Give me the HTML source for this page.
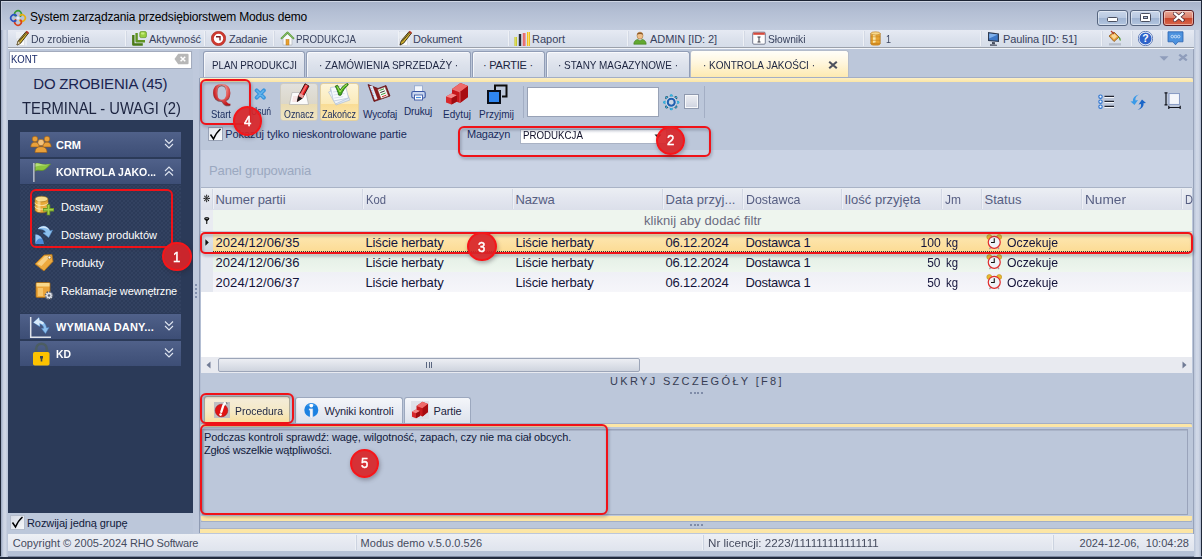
<!DOCTYPE html>
<html lang="pl"><head><meta charset="utf-8"><title>System zarządzania przedsiębiorstwem Modus demo</title>
<style>
html,body{margin:0;padding:0}
body{width:1202px;height:559px;overflow:hidden;position:relative;background:#bcc7da;font-family:"Liberation Sans", sans-serif;}
#w{position:absolute;left:0;top:0;width:1202px;height:559px;overflow:hidden}
#w div,#w span.t,#w svg{position:absolute;box-sizing:border-box}
#w span.t{white-space:pre;}
</style></head><body><div id="w">
<div style="left:0;top:0;width:1202px;height:559px;background:#b6c1d6"></div>
<div style="left:0px;top:0px;width:1202px;height:30px;background:linear-gradient(#a6b1c8,#b4bfd4 40%,#c2ccde)"></div>
<div style="left:0px;top:0px;width:1202px;height:1px;background:#1b2232"></div>
<div style="left:1px;top:1px;width:1200px;height:1px;background:#cfd6e4"></div>
<div style="left:0px;top:0px;width:1px;height:559px;background:#1f2738"></div>
<div style="left:1201px;top:0px;width:1px;height:559px;background:#1f2738"></div>
<div style="left:0px;top:556px;width:1202px;height:1px;background:#7f8aa2"></div>
<div style="left:0px;top:557px;width:1202px;height:2px;background:#232b3d"></div>
<div style="left:1px;top:30px;width:7px;height:527px;background:linear-gradient(90deg,#98a4bc 0,#c6cfe0 30%,#d2d9e7 60%,#b7c2d6 100%)"></div>
<div style="left:1px;top:2px;width:1px;height:28px;background:#c3cbdc"></div>
<div style="left:1194px;top:30px;width:7px;height:527px;background:linear-gradient(90deg,#b9c4d8 0,#d0d8e7 35%,#cdd5e5 70%,#aab5cb 100%)"></div>
<svg style="left:9px;top:9px" width="18" height="18" viewBox="0 0 18 18" fill="none" stroke-width="1.700" stroke-linecap="round">
<path d="M6.200 6.800A3.300 3.300 0 1 1 11.500 7.200" stroke="#3a9a35"/>
<path d="M11.200 6.200A3.300 3.300 0 1 1 10.800 11.500" stroke="#e8b010"/>
<path d="M11.800 11.200A3.300 3.300 0 1 1 6.500 10.800" stroke="#d8401c"/>
<path d="M6.800 11.800A3.300 3.300 0 1 1 7.200 6.500" stroke="#2a52c0"/>
<circle cx="9" cy="9" r="1.600" fill="#e8ecf4" stroke="none"/>
</svg>
<span class="t" style="left:30px;top:9.0px;font-size:12px;line-height:16px;color:#000;letter-spacing:-0.15px;">System zarządzania przedsiębiorstwem Modus demo</span>
<div style="left:1097px;top:10px;width:31px;height:16px;border:1px solid #56657f;border-radius:3px;background:linear-gradient(#c9d6ea,#b8c8e0 50%,#9fb3d1 50%,#b3c6e0);box-shadow:inset 0 0 0 1px rgba(255,255,255,.45)"></div>
<div style="left:1130px;top:10px;width:31px;height:16px;border:1px solid #56657f;border-radius:3px;background:linear-gradient(#c9d6ea,#b8c8e0 50%,#9fb3d1 50%,#b3c6e0);box-shadow:inset 0 0 0 1px rgba(255,255,255,.45)"></div>
<div style="left:1163px;top:10px;width:31px;height:16px;border:1px solid #5e1e24;border-radius:3px;background:linear-gradient(#e9a898,#dc7e69 50%,#c9452b 50%,#d8674c);box-shadow:inset 0 0 0 1px rgba(255,255,255,.45)"></div>
<div style="left:1107px;top:17px;width:11px;height:5px;border:1px solid #4a4f60;border-radius:1.5px;background:#fff"></div>
<div style="left:1140px;top:13px;width:11px;height:9px;border:1px solid #4a4f60;border-radius:1.5px;background:#fff"></div>
<div style="left:1143px;top:16px;width:5px;height:3px;border:1px solid #4a4f60;background:#b5c4dc"></div>
<svg style="left:1173px;top:12.300px" width="11.500" height="9.800" viewBox="0 0 13 11"><path d="M2.200 1.800l8.600 7.400M10.800 1.800L2.200 9.200" stroke="#4e2a34" stroke-width="4.200" stroke-linecap="square"/><path d="M2.200 1.800l8.600 7.400M10.800 1.800L2.200 9.200" stroke="#fff" stroke-width="2.600" stroke-linecap="square"/></svg>
<div style="left:8px;top:30px;width:1186px;height:17px;background:linear-gradient(#e6eaf3,#dbe1ec 55%,#d6dde9)"></div>
<div style="left:8px;top:47px;width:1186px;height:1px;background:#9ba1ab"></div>
<div style="left:8px;top:48px;width:1186px;height:1px;background:#f4f6fa"></div>
<div style="left:8px;top:49px;width:1185px;height:485px;background:#bcc7da"></div>
<div style="left:125px;top:31px;width:1px;height:15px;background:#eef1f6"></div>
<div style="left:126px;top:31px;width:1px;height:15px;background:#d3d9e5"></div>
<div style="left:204px;top:31px;width:1px;height:15px;background:#eef1f6"></div>
<div style="left:205px;top:31px;width:1px;height:15px;background:#d3d9e5"></div>
<div style="left:273px;top:31px;width:1px;height:15px;background:#eef1f6"></div>
<div style="left:274px;top:31px;width:1px;height:15px;background:#d3d9e5"></div>
<div style="left:398px;top:31px;width:1px;height:15px;background:#eef1f6"></div>
<div style="left:399px;top:31px;width:1px;height:15px;background:#d3d9e5"></div>
<div style="left:508px;top:31px;width:1px;height:15px;background:#eef1f6"></div>
<div style="left:509px;top:31px;width:1px;height:15px;background:#d3d9e5"></div>
<div style="left:627px;top:31px;width:1px;height:15px;background:#eef1f6"></div>
<div style="left:628px;top:31px;width:1px;height:15px;background:#d3d9e5"></div>
<div style="left:743px;top:31px;width:1px;height:15px;background:#eef1f6"></div>
<div style="left:744px;top:31px;width:1px;height:15px;background:#d3d9e5"></div>
<div style="left:863px;top:31px;width:1px;height:15px;background:#eef1f6"></div>
<div style="left:864px;top:31px;width:1px;height:15px;background:#d3d9e5"></div>
<div style="left:980px;top:31px;width:1px;height:15px;background:#eef1f6"></div>
<div style="left:981px;top:31px;width:1px;height:15px;background:#d3d9e5"></div>
<div style="left:1101px;top:31px;width:1px;height:15px;background:#eef1f6"></div>
<div style="left:1102px;top:31px;width:1px;height:15px;background:#d3d9e5"></div>
<div style="left:1131px;top:31px;width:1px;height:15px;background:#eef1f6"></div>
<div style="left:1132px;top:31px;width:1px;height:15px;background:#d3d9e5"></div>
<div style="left:1161px;top:31px;width:1px;height:15px;background:#eef1f6"></div>
<div style="left:1162px;top:31px;width:1px;height:15px;background:#d3d9e5"></div>
<span class="t" style="left:30.5px;top:31.5px;font-size:11px;line-height:15px;color:#38425e;transform:scaleX(0.947);transform-origin:0 50%;">Do zrobienia</span>
<span class="t" style="left:149px;top:31.5px;font-size:11px;line-height:15px;color:#38425e;letter-spacing:-0.06px;">Aktywność</span>
<span class="t" style="left:229px;top:31.5px;font-size:11px;line-height:15px;color:#38425e;letter-spacing:-0.25px;">Zadanie</span>
<span class="t" style="left:296px;top:31.5px;font-size:11px;line-height:15px;color:#38425e;transform:scaleX(0.884);transform-origin:0 50%;">PRODUKCJA</span>
<span class="t" style="left:413px;top:31.5px;font-size:11px;line-height:15px;color:#38425e;letter-spacing:-0.14px;">Dokument</span>
<span class="t" style="left:532px;top:31.5px;font-size:11px;line-height:15px;color:#38425e;letter-spacing:-0.01px;">Raport</span>
<span class="t" style="left:650px;top:31.5px;font-size:11px;line-height:15px;color:#38425e;letter-spacing:-0.06px;">ADMIN [ID: 2]</span>
<span class="t" style="left:768px;top:31.5px;font-size:11px;line-height:15px;color:#38425e;transform:scaleX(0.929);transform-origin:0 50%;">Słowniki</span>
<span class="t" style="left:886px;top:31.5px;font-size:11px;line-height:15px;color:#38425e;transform:scaleX(0.816);transform-origin:0 50%;">1</span>
<span class="t" style="left:1003px;top:31.5px;font-size:11px;line-height:15px;color:#38425e;letter-spacing:-0.08px;">Paulina [ID: 51]</span>
<svg style="left:16px;top:30px" width="14" height="16" viewBox="0 0 14 16"><path d="M0 2h11v13.500H0z" fill="#f4f5f8" opacity=".55"/><path d="M.5 9h8v6.500H.5z" fill="#fbfbfb" stroke="#c9ccd4" stroke-width=".5"/><path d="M1 15l1.2-4.2L10.2 1.5l2.2 1.7L4.6 13.2z" fill="#d8b62e" stroke="#2a2410" stroke-width=".9"/><path d="M10.2 1.5l2.2 1.7" stroke="#c0392b" stroke-width="2"/><path d="M1 15l1.2-4.2 2.4 2.4z" fill="#f1e6c8" stroke="#5a4a20" stroke-width=".6"/><path d="M3 11.5L10.8 2.6" stroke="#3b3320" stroke-width=".9"/></svg>
<svg style="left:132px;top:31px" width="16" height="15" viewBox="0 0 16 15"><path d="M1.300 4v9.500h9.500" fill="none" stroke="#4a7a16" stroke-width="2.400" stroke-linejoin="round"/><path d="M4.600 2v8.300h8.400" fill="none" stroke="#5f9420" stroke-width="2.400" stroke-linejoin="round"/><rect x="7.800" y=".6" width="6.600" height="6" rx="1.400" fill="#9ad040" stroke="#5f9420" stroke-width=".7"/><rect x="9" y="1.600" width="3.500" height="2" rx=".8" fill="#c8ec80"/></svg>
<svg style="left:211px;top:31px" width="15" height="15" viewBox="0 0 15 15"><circle cx="7.500" cy="7.500" r="6" fill="#fff" stroke="#cf3a30" stroke-width="2.600"/><circle cx="7.500" cy="7.500" r="7.200" fill="none" stroke="#9a2a24" stroke-width=".5"/><path d="M5 5.800h4v3.600" fill="none" stroke="#7a2224" stroke-width="1.400"/></svg>
<svg style="left:279.500px;top:30.500px" width="15" height="15" viewBox="0 0 15 15"><path d="M3 7v7h9V7L7.500 2.800z" fill="#fafafa" stroke="#b0b4bc" stroke-width=".7"/><rect x="6" y="8.500" width="3" height="5.500" fill="#e8a030" stroke="#b87818" stroke-width=".5"/><path d="M1 7.800l6.500-6.300 6.500 6.300" fill="none" stroke="#5c9c3c" stroke-width="1.800" stroke-linejoin="round"/><path d="M1.600 7.200l5.900-5.700 5.900 5.700" fill="none" stroke="#a4d47c" stroke-width=".6"/></svg>
<svg style="left:399px;top:30px" width="14" height="16" viewBox="0 0 14 16"><path d="M0 2h11v13.500H0z" fill="#f4f5f8" opacity=".55"/><path d="M.5 9h8v6.500H.5z" fill="#fbfbfb" stroke="#c9ccd4" stroke-width=".5"/><path d="M1 15l1.2-4.2L10.2 1.5l2.2 1.7L4.6 13.2z" fill="#d8b62e" stroke="#2a2410" stroke-width=".9"/><path d="M10.2 1.5l2.2 1.7" stroke="#c0392b" stroke-width="2"/><path d="M3 11.5L10.8 2.6" stroke="#3b3320" stroke-width=".9"/></svg>
<svg style="left:514px;top:31px" width="17" height="15" viewBox="0 0 17 15"><rect x=".5" y="6" width="2.400" height="9" fill="#c4c41e"/><rect x="1.300" y="6" width=".8" height="9" fill="#e8e870"/><rect x="4.800" y="3" width="2.400" height="12" fill="#262c3a"/><rect x="8.800" y="2" width="2.600" height="13" fill="#e04a4c"/><rect x="9.600" y="2" width=".9" height="13" fill="#f6a0a0"/><rect x="13" y="1" width="3" height="14" fill="#f0c020"/><rect x="14" y="1" width="1" height="14" fill="#f8e070"/></svg>
<svg style="left:633px;top:31px" width="14" height="14" viewBox="0 0 14 14"><path d="M.8 13.200c0-3 2-4.500 4-4.800l2.200 1.600 2.200-1.600c2 .3 4 1.800 4 4.800z" fill="#62a830" stroke="#3d7a1a" stroke-width=".6"/><ellipse cx="7" cy="4.600" rx="3" ry="3.500" fill="#efc08a" stroke="#a9743a" stroke-width=".6"/><path d="M4 3.800c.3-3 5.700-3 6 0-1.500-1.200-4.500-1.200-6 0z" fill="#8a5a2a"/></svg>
<svg style="left:752px;top:31px" width="14" height="14" viewBox="0 0 14 14"><rect x=".7" y="1.200" width="12.600" height="12" rx="1.200" fill="#fdfdfd" stroke="#6a7288" stroke-width=".9"/><rect x="1.200" y="1.600" width="11.600" height="2.200" fill="#d64a3c"/><path d="M5.500 6h3M7 6v5M5.500 11h3" stroke="#3a3a44" stroke-width="1"/></svg>
<svg style="left:870px;top:31px" width="11" height="15" viewBox="0 0 11 15"><rect x=".8" y="2.300" width="9.400" height="10.700" fill="#e8a432"/><rect x="3" y="2.300" width="2.600" height="10.700" fill="#fbe6a6"/><path d="M.8 5.800h9.400M.8 9.300h9.400" stroke="#c98a24" stroke-width=".7"/><ellipse cx="5.500" cy="13" rx="4.700" ry="1.500" fill="#d08a20"/><ellipse cx="5.500" cy="2.400" rx="4.700" ry="1.600" fill="#f8d88a" stroke="#b9791c" stroke-width=".6"/><path d="M.8 2.400v10.600M10.200 2.400v10.600" stroke="#a9701c" stroke-width=".7"/></svg>
<svg style="left:987px;top:31px" width="14" height="15" viewBox="0 0 14 15"><path d="M1 1l11 1.500v8.500L1 10z" fill="#2d3a52"/><path d="M2.200 2.400l8.600 1.200v6.200l-8.600-.8z" fill="#3d78c8"/><path d="M2.200 2.400l8.600 1.200-8.600 4z" fill="#7fb0ec"/><path d="M5 11l3 .3v2l-3 -.2zM3 13.200l7 .6v1H3z" fill="#454c5c"/></svg>
<svg style="left:1107px;top:30px" width="16" height="16" viewBox="0 0 16 16"><path d="M2 6l5-4 5 5-5 4.500z" fill="#e9a23a" stroke="#8a5618" stroke-width=".8"/><path d="M4 6l3-2.500 3 3-3 2.700z" fill="#f8d898"/><path d="M4 1l3 3" stroke="#b03a2a" stroke-width="1.200"/><path d="M11.500 6.500c2 .5 2.500 2.500 2 4.500-1-.5-1.500-2-2-4.500z" fill="#4d9a2a"/><rect x="2" y="13.200" width="12" height="2.200" fill="#b5bcc9"/></svg>
<svg style="left:1138px;top:31px" width="15" height="15" viewBox="0 0 15 15"><circle cx="7.500" cy="7.500" r="6.700" fill="#2f63c9" stroke="#fff" stroke-width="1.200"/><circle cx="7.500" cy="7.500" r="7.200" fill="none" stroke="#2a4f9f" stroke-width=".7"/><text x="7.500" y="11.200" font-family="Liberation Sans, sans-serif" font-weight="bold" font-size="10.500" text-anchor="middle" fill="#fff">?</text></svg>
<svg style="left:1167px;top:31px" width="17" height="15" viewBox="0 0 17 15"><path d="M1 .800h15v10h-5L8.500 13.800 6 10.800H1z" fill="#4d92de" stroke="#2a63b0" stroke-width=".8"/><circle cx="5.300" cy="5.600" r="1.300" fill="none" stroke="#dcebfb" stroke-width=".8"/><circle cx="8.500" cy="5.600" r="1.300" fill="none" stroke="#dcebfb" stroke-width=".8"/><circle cx="11.700" cy="5.600" r="1.300" fill="none" stroke="#dcebfb" stroke-width=".8"/></svg>
<div style="left:9px;top:50.5px;width:183px;height:18px;background:#fff;border:1px solid #a3abbd"></div>
<span class="t" style="left:11px;top:51.8px;font-size:11px;line-height:15px;color:#1a2a6a;transform:scaleX(0.867);transform-origin:0 50%;">KONT</span>
<svg style="left:173.500px;top:53px" width="15" height="12" viewBox="0 0 16 12"><path d="M4.500 .5h10a1 1 0 0 1 1 1v9a1 1 0 0 1-1 1h-10L.5 6z" fill="#b7b7b7"/><path d="M7 3.500l5 5M12 3.500l-5 5" stroke="#fff" stroke-width="1.600"/></svg>
<span class="t" style="left:33.3px;top:74.1px;font-size:15px;line-height:19px;color:#1a2450;letter-spacing:-0.21px;">DO ZROBIENIA (45)</span>
<span class="t" style="left:22px;top:98.0px;font-size:17px;line-height:21px;color:#1c2440;transform:scaleX(0.869);transform-origin:0 50%;">TERMINAL - UWAGI (2)</span>
<div style="left:8px;top:120px;width:185px;height:393px;background:#2b3a58"></div>
<div style="left:20px;top:185px;width:161px;height:128px;background-color:#2c3b59;background-image:radial-gradient(#364564 0.600px,transparent 0.950px),radial-gradient(#364564 0.600px,transparent 0.950px);background-size:4px 4px;background-position:0 0,2px 2px"></div>
<div style="left:20px;top:132px;width:161px;height:25px;background:linear-gradient(#50618a,#46577f 50%,#3d4e76)"></div>
<span class="t" style="left:56px;top:137.5px;font-size:11px;line-height:15px;color:#fff;letter-spacing:-0.02px;font-weight:bold;">CRM</span>
<svg style="left:164px;top:138px" width="10" height="12" viewBox="0 0 10 12"><path d="M1 1.500l4 4 4-4M1 6l4 4 4-4" fill="none" stroke="#dfe5f0" stroke-width="1.100"/></svg>
<div style="left:20px;top:159px;width:161px;height:25px;background:linear-gradient(#50618a,#46577f 50%,#3d4e76)"></div>
<span class="t" style="left:56px;top:164.5px;font-size:11px;line-height:15px;color:#fff;font-weight:bold;transform:scaleX(0.955);transform-origin:0 50%;">KONTROLA JAKO...</span>
<svg style="left:164px;top:165px" width="10" height="12" viewBox="0 0 10 12"><path d="M1 6l4-4 4 4M1 10.500l4-4 4 4" fill="none" stroke="#dfe5f0" stroke-width="1.100"/></svg>
<div style="left:20px;top:314px;width:161px;height:25px;background:linear-gradient(#50618a,#46577f 50%,#3d4e76)"></div>
<span class="t" style="left:56px;top:319.5px;font-size:11px;line-height:15px;color:#fff;letter-spacing:0.16px;font-weight:bold;">WYMIANA DANY...</span>
<svg style="left:164px;top:320px" width="10" height="12" viewBox="0 0 10 12"><path d="M1 1.500l4 4 4-4M1 6l4 4 4-4" fill="none" stroke="#dfe5f0" stroke-width="1.100"/></svg>
<div style="left:20px;top:341px;width:161px;height:25px;background:linear-gradient(#50618a,#46577f 50%,#3d4e76)"></div>
<span class="t" style="left:56px;top:346.5px;font-size:11px;line-height:15px;color:#fff;font-weight:bold;transform:scaleX(0.944);transform-origin:0 50%;">KD</span>
<svg style="left:164px;top:347px" width="10" height="12" viewBox="0 0 10 12"><path d="M1 1.500l4 4 4-4M1 6l4 4 4-4" fill="none" stroke="#dfe5f0" stroke-width="1.100"/></svg>
<span class="t" style="left:61px;top:199.5px;font-size:11px;line-height:15px;color:#fff;letter-spacing:-0.03px;">Dostawy</span>
<span class="t" style="left:61px;top:227.5px;font-size:11px;line-height:15px;color:#fff;">Dostawy produktów</span>
<span class="t" style="left:61px;top:255.5px;font-size:11px;line-height:15px;color:#fff;letter-spacing:-0.05px;">Produkty</span>
<span class="t" style="left:61px;top:283.5px;font-size:11px;line-height:15px;color:#fff;letter-spacing:-0.15px;">Reklamacje wewnętrzne</span>
<svg style="left:30px;top:135px" width="22" height="19" viewBox="0 0 22 19"><g fill="#e8a03a" stroke="#9a5c14" stroke-width=".6"><circle cx="5" cy="4" r="2.800"/><circle cx="17" cy="4" r="2.800"/><path d="M.800 12c0-3.500 1.800-4.800 4.200-4.800S9.200 8.500 9.200 12zM12.800 12c0-3.500 1.800-4.800 4.200-4.800s4.200 1.300 4.200 4.800z"/><circle cx="11" cy="7.500" r="3.200" fill="#f3c27a"/><path d="M5 17.500c0-4.200 2.600-5.800 6-5.800s6 1.600 6 5.800z"/></g></svg>
<svg style="left:32px;top:162px" width="20" height="21" viewBox="0 0 20 21"><path d="M2.500 2c4-2.500 7 2.500 16 0-2 2.500-3.500 3.500-5.500 5.500-4 2.500-6-1-10.500 2z" fill="#8cc63f" stroke="#5d8f22" stroke-width=".7"/><path d="M2.500 2c4-2.500 7 2.500 16 0-5 3-9 0-16 3z" fill="#b7e07a"/><path d="M2 1v19" stroke="#d8dde8" stroke-width="1.400"/><path d="M3 1v19" stroke="#4a5060" stroke-width=".7"/></svg>
<svg style="left:34px;top:195px" width="21" height="21" viewBox="0 0 21 21"><g stroke="#9a6a14" stroke-width=".6"><path d="M1 4v11c0 1.600 3 2.800 6.500 2.800S14 16.600 14 15V4z" fill="#e8aa3a"/><ellipse cx="7.500" cy="4" rx="6.500" ry="2.800" fill="#f8dc8c"/><path d="M1 7.700c0 1.600 3 2.800 6.500 2.800S14 9.300 14 7.700M1 11.400c0 1.600 3 2.800 6.500 2.800S14 13 14 11.400" fill="none" stroke="#fbe9b5" stroke-width="1"/></g><rect x="3.500" y="5" width="3" height="12" fill="#f9e3a6" opacity=".6"/><path d="M14.500 9.300v11M9 14.800h11" stroke="#6f9a22" stroke-width="3.400"/><path d="M14.500 10v9.600M9.700 14.800h9.600" stroke="#a4d04a" stroke-width="1.500"/></svg>
<svg style="left:34px;top:224px" width="21" height="21" viewBox="0 0 21 21"><path d="M1.500 20V10.500c4 0 7.500 3 8.500 9.500z" fill="#4a8ad8"/><path d="M1.500 20V10.500c2.500 0 5 1.500 6.500 4.500-2.500-1-5-.5-6.500 5z" fill="#9cc8f2"/><path d="M4 5c3-4 9.500-4 12 2l2.500-.8-3.800 7.300-5.700-4.500 2.800-.8c-1.500-3-5-3.500-7.800-3.200z" fill="#8cc0ee" stroke="#5a98d8" stroke-width=".5"/><path d="M4 5c3-4 9.500-4 12 2-3-3.500-8-4-12-2z" fill="#d6e9fa"/></svg>
<svg style="left:34px;top:253px" width="20" height="19" viewBox="0 0 20 19"><path d="M1 11l9-9 8-.5 1 7-9 9.500z" fill="#eda93e" stroke="#a9701a" stroke-width=".8"/><path d="M3 11l8-8 6-.3-9.500 10.300z" fill="#f8cf82"/><circle cx="15.500" cy="4.500" r="1.400" fill="#fff" stroke="#8a5a14" stroke-width=".6"/></svg>
<svg style="left:35px;top:281px" width="20" height="20" viewBox="0 0 20 20"><rect x="1" y="1.500" width="14" height="15" rx="1.200" fill="#eba53a" stroke="#a56a14" stroke-width=".8"/><rect x="1.500" y="2" width="13" height="3.500" fill="#f9d88a"/><rect x="3" y="7" width="5" height="8" fill="#f6c56a"/><circle cx="14" cy="14.500" r="3.600" fill="#dfe3ea" stroke="#5e6573" stroke-width="1.600" stroke-dasharray="1.600 1.200"/><circle cx="14" cy="14.500" r="1.300" fill="#5e6573"/></svg>
<svg style="left:29px;top:316px" width="23" height="23" viewBox="0 0 23 23"><path d="M1.700 1v20.300H22" fill="none" stroke="#dfe3ea" stroke-width="1.500"/><path d="M4.500 6.500L10 1.500l.5 3c4 .5 6.500 3.500 7 7.500l2.500-.5-3.500 6-4-5 2.300-.300c-.5-2.500-2-4-4.500-4.500l.5 3z" fill="#8ec0ee" stroke="#4a86c8" stroke-width=".5"/><path d="M4.500 6.500L10 1.500l.5 3c2 .300 3.500 1.200 4.700 2.600l-2 1.500c-.8-.8-1.800-1.300-2.900-1.500l.500 3z" fill="#d8eafa"/></svg>
<svg style="left:32px;top:342px" width="19" height="24" viewBox="0 0 19 24"><path d="M4.200 11V7a5.300 5.300 0 0 1 10.600 0v4" fill="none" stroke="#4c5d62" stroke-width="2.600"/><rect x="1" y="10" width="16.500" height="13.500" rx="1.800" fill="#fcc200"/><path d="M8 14h3v2.200l-.7.600v2.700H8.700v-2.700L8 16.200z" fill="#3a4450"/></svg>
<div style="left:30px;top:189px;width:143px;height:59px;border:2px solid #f01218;border-radius:6px;filter:drop-shadow(1px 2px 1.500px rgba(50,50,70,.38))"></div>
<div style="left:162.0px;top:241.7px;width:29.600px;height:29.600px;border-radius:50%;background:rgba(216,36,40,.92);border:2px solid #f5161a;box-shadow:1px 2px 4px rgba(40,30,40,.35)"></div>
<span class="t" style="left:173.10000000000002px;top:246.5px;font-size:15px;line-height:19px;color:#fff;transform:scaleX(0.875);transform-origin:0 50%;-webkit-text-stroke:.5px #fff;">1</span>
<div style="left:10px;top:515px;width:15px;height:15px;background:linear-gradient(135deg,#d6dbe5,#f6f7fa);border:1px solid #b4bccb"></div>
<svg style="left:11px;top:516px" width="13" height="13" viewBox="0 0 13 13"><path d="M1.500 6.500l3 4.500c2-4.500 4-7.500 7-10" fill="none" stroke="#000" stroke-width="1.500"/></svg>
<span class="t" style="left:27px;top:515.5px;font-size:11px;line-height:15px;color:#111a3a;letter-spacing:-0.08px;">Rozwijaj jedną grupę</span>
<div style="left:8px;top:534px;width:1186px;height:17px;background:linear-gradient(#edf0f5,#e6e9f1 50%,#dfe4ed)"></div>
<div style="left:355px;top:535px;width:1px;height:15px;background:#eef1f6"></div>
<div style="left:356px;top:535px;width:1px;height:15px;background:#ccd3e0"></div>
<div style="left:702px;top:535px;width:1px;height:15px;background:#eef1f6"></div>
<div style="left:703px;top:535px;width:1px;height:15px;background:#ccd3e0"></div>
<div style="left:1052px;top:535px;width:1px;height:15px;background:#eef1f6"></div>
<div style="left:1053px;top:535px;width:1px;height:15px;background:#ccd3e0"></div>
<span class="t" style="left:12.7px;top:535.5px;font-size:11px;line-height:15px;color:#454b5e;letter-spacing:0.03px;">Copyright © 2005-2024</span>
<span class="t" style="left:130px;top:535.5px;font-size:11px;line-height:15px;color:#454b5e;letter-spacing:-0.22px;">RHO Software</span>
<span class="t" style="left:360.5px;top:535.5px;font-size:11px;line-height:15px;color:#454b5e;letter-spacing:0.06px;">Modus demo v.5.0.0.526</span>
<span class="t" style="left:708.3px;top:535.5px;font-size:11px;line-height:15px;color:#454b5e;transform:scaleX(1.056);transform-origin:0 50%;">Nr licencji: 2223/111111111111111</span>
<span class="t" style="left:1079.5px;top:535.5px;font-size:11px;line-height:15px;color:#454b5e;letter-spacing:0.06px;">2024-12-06,  10:04:28</span>
<div style="left:193px;top:49px;width:6px;height:485px;background:#bfc9dc"></div>
<div style="left:199px;top:78px;width:1px;height:455px;background:#8f9bb3"></div>
<div style="left:200px;top:78px;width:1px;height:455px;background:#b3bed3"></div>
<div style="left:195px;top:284px;width:2px;height:2px;background:#8290ae"></div>
<div style="left:195px;top:288px;width:2px;height:2px;background:#8290ae"></div>
<div style="left:195px;top:292px;width:2px;height:2px;background:#8290ae"></div>
<div style="left:195px;top:296px;width:2px;height:2px;background:#8290ae"></div>
<div style="left:203px;top:50.500px;width:102px;height:26.500px;border:1px solid #919db6;border-bottom:none;border-radius:3px 3px 0 0;background:linear-gradient(#eaedf4,#dde2ec 50%,#d3dae6);box-shadow:inset 1px 1px 0 rgba(255,255,255,.7)"></div>
<span class="t" style="left:212px;top:57.5px;font-size:11px;line-height:15px;color:#1c2440;transform:scaleX(0.891);transform-origin:0 50%;">PLAN PRODUKCJI</span>
<div style="left:306px;top:50.500px;width:165px;height:26.500px;border:1px solid #919db6;border-bottom:none;border-radius:3px 3px 0 0;background:linear-gradient(#eaedf4,#dde2ec 50%,#d3dae6);box-shadow:inset 1px 1px 0 rgba(255,255,255,.7)"></div>
<span class="t" style="left:319.2px;top:57.5px;font-size:11px;line-height:15px;color:#1c2440;transform:scaleX(0.911);transform-origin:0 50%;">· ZAMÓWIENIA SPRZEDAŻY ·</span>
<div style="left:472px;top:50.500px;width:73px;height:26.500px;border:1px solid #919db6;border-bottom:none;border-radius:3px 3px 0 0;background:linear-gradient(#eaedf4,#dde2ec 50%,#d3dae6);box-shadow:inset 1px 1px 0 rgba(255,255,255,.7)"></div>
<span class="t" style="left:483px;top:57.5px;font-size:11px;line-height:15px;color:#1c2440;letter-spacing:-0.22px;">· PARTIE ·</span>
<div style="left:546px;top:50.500px;width:144px;height:26.500px;border:1px solid #919db6;border-bottom:none;border-radius:3px 3px 0 0;background:linear-gradient(#eaedf4,#dde2ec 50%,#d3dae6);box-shadow:inset 1px 1px 0 rgba(255,255,255,.7)"></div>
<span class="t" style="left:558px;top:57.5px;font-size:11px;line-height:15px;color:#1c2440;transform:scaleX(0.903);transform-origin:0 50%;">· STANY MAGAZYNOWE ·</span>
<div style="left:690px;top:49.500px;width:159px;height:28.500px;border:1px solid #b4bccb;border-bottom:none;border-radius:3px 3px 0 0;background:linear-gradient(#fffefa,#fff6dc 45%,#fde9ae)"></div>
<span class="t" style="left:703px;top:57.5px;font-size:11px;line-height:15px;color:#1c2440;transform:scaleX(0.907);transform-origin:0 50%;">· KONTROLA JAKOŚCI ·</span>
<svg style="left:828px;top:61px" width="10" height="8" viewBox="0 0 10 8"><path d="M1.200 .8l7.600 6.400M8.800 .8L1.200 7.200" stroke="#4d515d" stroke-width="2.100"/></svg>
<svg style="left:1158.500px;top:56px" width="10" height="5" viewBox="0 0 10 5"><path d="M.5 .3h9L5 4.800z" fill="#8f9dbb"/></svg>
<svg style="left:1178px;top:54px" width="10" height="7" viewBox="0 0 10 7"><path d="M1.200 .6l7.600 5.800M8.800 .6L1.200 6.400" stroke="#8f9dbb" stroke-width="2.300"/></svg>
<div style="left:200px;top:77px;width:993px;height:1px;background:#a3aec5"></div>
<div style="left:200px;top:78px;width:993px;height:4px;background:linear-gradient(#fdf0c6,#fbe6a6);border-radius:0 2px 0 0"></div>
<div style="left:1193px;top:49px;width:1px;height:485px;background:#98a3ba"></div>
<div style="left:201px;top:82px;width:992px;height:68px;background:#bcc7da"></div>
<div style="left:201px;top:150px;width:992px;height:37.5px;background:#cad3e4"></div>
<div style="left:280px;top:83px;width:38px;height:37.5px;border:1px solid #cfccc2;border-radius:3px;background:linear-gradient(#e2e1dc,#dbd7ca 55%,#e9dbb2 55%,#f0e5c2)"></div>
<div style="left:320px;top:83px;width:39px;height:37.5px;border:1px solid #e2d0a0;border-radius:3px;background:linear-gradient(#fdf5da,#fbeab8 55%,#f9dc94 55%,#fbe7b0)"></div>
<span class="t" style="left:211px;top:108.0px;font-size:10px;line-height:14px;color:#182a5c;transform:scaleX(0.947);transform-origin:0 50%;">Start</span>
<span class="t" style="left:251px;top:105.0px;font-size:10px;line-height:14px;color:#182a5c;transform:scaleX(0.856);transform-origin:0 50%;">Usuń</span>
<span class="t" style="left:284px;top:108.0px;font-size:10px;line-height:14px;color:#182a5c;transform:scaleX(0.885);transform-origin:0 50%;">Oznacz</span>
<span class="t" style="left:322px;top:108.0px;font-size:10px;line-height:14px;color:#182a5c;transform:scaleX(0.9);transform-origin:0 50%;">Zakończ</span>
<span class="t" style="left:363px;top:108.0px;font-size:10px;line-height:14px;color:#182a5c;letter-spacing:-0.21px;">Wycofaj</span>
<span class="t" style="left:404px;top:105.0px;font-size:10px;line-height:14px;color:#182a5c;letter-spacing:-0.15px;">Drukuj</span>
<span class="t" style="left:443px;top:108.0px;font-size:10px;line-height:14px;color:#182a5c;letter-spacing:0.03px;">Edytuj</span>
<span class="t" style="left:479px;top:108.0px;font-size:10px;line-height:14px;color:#182a5c;">Przyjmij</span>
<span class="t" style="left:211.5px;top:77.5px;font-size:25.5px;line-height:29.5px;color:#c8181c;font-weight:bold;transform:scaleX(0.983);transform-origin:0 50%;font-family:'Liberation Serif',serif;color:transparent;background:radial-gradient(ellipse at 55% 42%,#fbd4d0 0,#ea6a68 30%,#c4181c 62%,#a80c12 85%);-webkit-background-clip:text;background-clip:text;filter:drop-shadow(.8px 1px .5px rgba(90,20,20,.65))">Q</span>
<svg style="left:254px;top:87.700px" width="12.500" height="12" viewBox="0 0 13 13"><path d="M2.600 2.600l7.800 7.800M10.400 2.600l-7.800 7.800" stroke="#3a96dc" stroke-width="4.300" stroke-linecap="round"/><path d="M3 3l7 7M10 3l-7 7" stroke="#62b4ec" stroke-width="1.800" stroke-linecap="round"/></svg>
<svg style="left:288px;top:83px" width="22" height="23" viewBox="0 0 22 23"><path d="M4 9.500h14l2.500 12H1.500z" fill="#fbfbfb" stroke="#a9a9a9" stroke-width=".6"/><path d="M5 14h6M4.600 16h7M4.300 18h5" stroke="#f0b4b4" stroke-width=".6"/><path d="M9.300 18.500l1.200-5.500L17 .8l4 2.200-6.500 12z" fill="#e01418" stroke="#2a1414" stroke-width=".9"/><path d="M12 11.500l5.800-10 1.600.9-5.600 10z" fill="#f46a6a"/><path d="M9.300 18.500l1.200-5.500 4 2.200z" fill="#1a1a1a"/><path d="M10.500 13l1.500-2.700 4 2.200-1.500 2.700z" fill="#e8a0a0"/></svg>
<svg style="left:327px;top:83px" width="25" height="23" viewBox="0 0 25 23"><path d="M3 6l14-2 6 13-14 5z" fill="#dfe8f5" stroke="#a8b8d0" stroke-width=".6"/><path d="M1.500 9l13-5 7 11-13 6z" fill="#eef3fa" stroke="#a8b8d0" stroke-width=".6"/><path d="M3.500 4.500l15-2 3 12.500-15 3z" fill="#f8fafd" stroke="#a8b8d0" stroke-width=".6"/><path d="M6 9l11-1.500M6.600 12l11-1.500M7.200 15l9-1.300" stroke="#c5d2e6" stroke-width=".7"/><path d="M8.200 3.200l2.300-1 2.700 4.800C15 3.800 17.500 1.500 20.500.5l.8 1.500c-3 2.200-5.500 5.500-7.300 10.200h-2.200C10.800 8.700 9.800 5.800 8.200 3.200z" fill="#49b01e" stroke="#1f5e10" stroke-width=".8"/><path d="M10.200 3.500l2.800 5.500c1.500-3 4-5.800 7-7.500" fill="none" stroke="#b4e860" stroke-width=".9"/></svg>
<svg style="left:367px;top:83px" width="24" height="22" viewBox="0 0 24 22"><path d="M1 1.500l6 17 16-5.500L19 2.500l-8 3z" fill="#8a1a1c" stroke="#5a0c0e" stroke-width=".7"/><path d="M2.500 3l5.300 14 2.700-1L5.500 2.800z" fill="#dfe8f4"/><path d="M3.500 5l1 .3M4.300 7.500l1.200.3M5.200 10l1.200.3M6 12.500l1.200.3" stroke="#5a88c8" stroke-width=".8"/><path d="M10.500 6.500l7.500-2.800 3.500 9.300-7.500 2.800z" fill="#fbfbf8" stroke="#6a2a2a" stroke-width=".5"/><path d="M12.500 7.500l4.500-1.700" stroke="#3a9a3a" stroke-width="1"/><path d="M13.300 9.600l4.500-1.700" stroke="#333" stroke-width="1"/><path d="M14.100 11.700l4.500-1.700" stroke="#3a9a3a" stroke-width="1"/><path d="M14.900 13.800l4.500-1.700" stroke="#d03030" stroke-width="1"/></svg>
<svg style="left:411px;top:85px" width="15" height="16" viewBox="0 0 15 16"><rect x="3.500" y=".8" width="8" height="6.500" fill="#f4f7fc" stroke="#8ea4cc" stroke-width=".8"/><rect x=".8" y="6.500" width="13.400" height="6.500" rx="1.600" fill="#c9d6ee" stroke="#3a58a5" stroke-width="1.100"/><rect x="3.500" y="10" width="8" height="5" fill="#fff" stroke="#3a58a5" stroke-width=".9"/><path d="M5 12.500h5" stroke="#4a90e0" stroke-width="1.200"/></svg>
<svg style="left:445px;top:82px" width="24" height="24" viewBox="0 0 24 24"><path d="M7 7l8.500-6L23 4v11l-8 6-8-3z" fill="#c8181c"/><path d="M7 7l8.500-6L23 4l-8 6z" fill="#ee6a6a"/><path d="M15 10l8-6v11l-8 6z" fill="#a80c10"/><path d="M7 7l8 3v11" fill="none" stroke="#f09090" stroke-width=".6"/><path d="M1 14.500l5.500-3 5.500 1.800v6.200L6.500 22.500 1 20.500z" fill="#d8282c"/><path d="M1 14.500l5.500-3 5.500 1.800-5.500 3z" fill="#f28a8a"/><path d="M6.500 16.300l5.500-3v6.200l-5.500 3z" fill="#a00c10"/></svg>
<svg style="left:486px;top:84px" width="22" height="20" viewBox="0 0 22 20"><path d="M9 6V1.500h11.500V12.500H16" fill="none" stroke="#0c0c0c" stroke-width="2"/><rect x="2" y="7" width="12" height="12" fill="#2f86f0" stroke="#0a0f1a" stroke-width="2"/></svg>
<div style="left:523px;top:86px;width:1px;height:31.5px;background:#a3aec4"></div>
<div style="left:704px;top:86px;width:1px;height:31.5px;background:#a3aec4"></div>
<div style="left:527px;top:87px;width:132px;height:30px;background:#fff;border:1px solid #98a2b6"></div>
<svg style="left:663px;top:94px" width="16.500" height="16.500" viewBox="0 0 16 16"><circle cx="8.00" cy="1.70" r="1.500" fill="#1c9ad0"/><circle cx="12.45" cy="3.55" r="1.500" fill="#1a3a58"/><circle cx="14.30" cy="8.00" r="1.500" fill="#1c9ad0"/><circle cx="12.45" cy="12.45" r="1.500" fill="#1a3a58"/><circle cx="8.00" cy="14.30" r="1.500" fill="#1c9ad0"/><circle cx="3.55" cy="12.45" r="1.500" fill="#1a3a58"/><circle cx="1.70" cy="8.00" r="1.500" fill="#1c9ad0"/><circle cx="3.55" cy="3.55" r="1.500" fill="#1a3a58"/><circle cx="8.00" cy="1.40" r=".9" fill="#35b8e0"/><circle cx="12.67" cy="3.33" r=".9" fill="#35b8e0"/><circle cx="14.60" cy="8.00" r=".9" fill="#35b8e0"/><circle cx="12.67" cy="12.67" r=".9" fill="#35b8e0"/><circle cx="8.00" cy="14.60" r=".9" fill="#35b8e0"/><circle cx="3.33" cy="12.67" r=".9" fill="#35b8e0"/><circle cx="1.40" cy="8.00" r=".9" fill="#35b8e0"/><circle cx="3.33" cy="3.33" r=".9" fill="#35b8e0"/><circle cx="8" cy="8" r="5.600" fill="#dbe6f0" stroke="#7fa0b8" stroke-width=".5"/><circle cx="8" cy="8" r="3.400" fill="#ccd6e4" stroke="#1f5fb0" stroke-width="2"/></svg>
<div style="left:684.3px;top:94.4px;width:14.7px;height:14.3px;background:linear-gradient(#eceef3,#dfe2ea 50%,#ced3e0);border:1px solid #8f99ae;box-shadow:inset 0 0 0 1px #f8f9fb"></div>
<svg style="left:1098px;top:94px" width="17" height="16" viewBox="0 0 17 16"><g fill="#eef4fc" stroke="#2a72d0" stroke-width="1.100"><circle cx="2.500" cy="2.700" r="1.700"/><circle cx="2.500" cy="7.700" r="1.700"/><circle cx="2.500" cy="12.700" r="1.700"/></g><path d="M6.500 3.500h9.500M6.500 8.500h9.500M6.500 13.500h9.500" stroke="#f2f5fa" stroke-width="1.200"/><path d="M6.500 2.300h9.500M6.500 7.300h9.500M6.500 12.300h9.500" stroke="#202430" stroke-width="1.300"/></svg>
<svg style="left:1130px;top:93.500px" width="16.500" height="16.500" viewBox="0 0 16.500 16.500"><path d="M9 .5C6 2 5 4 5.500 6.500L8 6 4.500 11 .5 7.500 3 7.200C2.500 4 5 1.500 9 .5z" fill="#3a9ae8"/><path d="M7.500 16c3-1.500 4-3.500 3.500-6l-2.500.5L12 5.500 16 9l-2.500.3c.5 3.200-2 5.700-6 6.700z" fill="#1a66c8"/></svg>
<svg style="left:1164px;top:92px" width="17" height="18" viewBox="0 0 17 18"><rect x="5" y="1.500" width="10.500" height="11" fill="#e9eef8" stroke="#8a9cc4" stroke-width="1"/><rect x="6" y="2.500" width="8.500" height="9" fill="#f4f6fb"/><path d="M2 .5v12.500M.5 .8h3M.500 12.800h3" stroke="#10131c" stroke-width="1.200"/><path d="M4.500 15.500h12M4.800 13.800v3.200M16.200 13.800v3.200" stroke="#10131c" stroke-width="1.200"/></svg>
<div style="left:208px;top:127px;width:15px;height:14px;background:linear-gradient(135deg,#e4e7ee,#fbfcfd);border:1px solid #98a2b6"></div>
<svg style="left:209px;top:127.500px" width="13" height="13" viewBox="0 0 13 13"><path d="M1.500 6.500l3 4.500c2-4.500 4-7.500 7-10" fill="none" stroke="#000" stroke-width="1.500"/></svg>
<span class="t" style="left:225.3px;top:126.8px;font-size:11px;line-height:15px;color:#182a5c;letter-spacing:-0.07px;">Pokazuj tylko nieskontrolowane partie</span>
<span class="t" style="left:467px;top:127.0px;font-size:11px;line-height:15px;color:#182a5c;letter-spacing:-0.23px;">Magazyn</span>
<div style="left:520px;top:128.5px;width:147px;height:15px;background:linear-gradient(#e9ecf2,#fff 30%);border:1px solid #a9b2c4"></div>
<span class="t" style="left:522.7px;top:127.7px;font-size:11px;line-height:15px;color:#10102a;transform:scaleX(0.884);transform-origin:0 50%;">PRODUKCJA</span>
<svg style="left:654px;top:134px" width="8" height="5" viewBox="0 0 8 5"><path d="M.5 .5h7L4 4.500z" fill="#222"/></svg>
<span class="t" style="left:209px;top:161.5px;font-size:13px;line-height:17px;color:#9ba8c0;letter-spacing:-0.13px;">Panel grupowania</span>
<div style="left:200px;top:78.5px;width:50.6px;height:46.9px;border:2px solid #f01218;border-radius:6px;filter:drop-shadow(1px 2px 1.500px rgba(50,50,70,.38))"></div>
<div style="left:232.89999999999998px;top:106.10000000000001px;width:29.600px;height:29.600px;border-radius:50%;background:rgba(216,36,40,.92);border:2px solid #f5161a;box-shadow:1px 2px 4px rgba(40,30,40,.35)"></div>
<span class="t" style="left:244.0px;top:110.9px;font-size:15px;line-height:19px;color:#fff;transform:scaleX(0.875);transform-origin:0 50%;-webkit-text-stroke:.5px #fff;">4</span>
<div style="left:458px;top:125.5px;width:253.3px;height:31.6px;border:2px solid #f01218;border-radius:6px;filter:drop-shadow(1px 2px 1.500px rgba(50,50,70,.38))"></div>
<div style="left:655.8000000000001px;top:125.50000000000001px;width:29.600px;height:29.600px;border-radius:50%;background:rgba(216,36,40,.92);border:2px solid #f5161a;box-shadow:1px 2px 4px rgba(40,30,40,.35)"></div>
<span class="t" style="left:666.9px;top:130.3px;font-size:15px;line-height:19px;color:#fff;transform:scaleX(0.875);transform-origin:0 50%;-webkit-text-stroke:.5px #fff;">2</span>
<div style="left:201px;top:187px;width:991px;height:1px;background:#a9b3c6"></div>
<div style="left:201px;top:188px;width:991px;height:170px;background:#fff"></div>
<div style="left:201px;top:188px;width:991px;height:22px;background:linear-gradient(#eceff4,#e3e6ef 50%,#dbdfea)"></div>
<div style="left:212px;top:189px;width:1px;height:20px;background:#d3d8e4"></div>
<div style="left:213px;top:189px;width:1px;height:20px;background:#eef0f6"></div>
<div style="left:362px;top:189px;width:1px;height:20px;background:#d3d8e4"></div>
<div style="left:363px;top:189px;width:1px;height:20px;background:#eef0f6"></div>
<div style="left:512px;top:189px;width:1px;height:20px;background:#d3d8e4"></div>
<div style="left:513px;top:189px;width:1px;height:20px;background:#eef0f6"></div>
<div style="left:662px;top:189px;width:1px;height:20px;background:#d3d8e4"></div>
<div style="left:663px;top:189px;width:1px;height:20px;background:#eef0f6"></div>
<div style="left:742px;top:189px;width:1px;height:20px;background:#d3d8e4"></div>
<div style="left:743px;top:189px;width:1px;height:20px;background:#eef0f6"></div>
<div style="left:841px;top:189px;width:1px;height:20px;background:#d3d8e4"></div>
<div style="left:842px;top:189px;width:1px;height:20px;background:#eef0f6"></div>
<div style="left:941px;top:189px;width:1px;height:20px;background:#d3d8e4"></div>
<div style="left:942px;top:189px;width:1px;height:20px;background:#eef0f6"></div>
<div style="left:981px;top:189px;width:1px;height:20px;background:#d3d8e4"></div>
<div style="left:982px;top:189px;width:1px;height:20px;background:#eef0f6"></div>
<div style="left:1081px;top:189px;width:1px;height:20px;background:#d3d8e4"></div>
<div style="left:1082px;top:189px;width:1px;height:20px;background:#eef0f6"></div>
<div style="left:1181px;top:189px;width:1px;height:20px;background:#d3d8e4"></div>
<div style="left:1182px;top:189px;width:1px;height:20px;background:#eef0f6"></div>
<span class="t" style="left:215.5px;top:190.5px;font-size:13px;line-height:17px;color:#565e82;letter-spacing:-0.07px;">Numer partii</span>
<span class="t" style="left:365.5px;top:190.5px;font-size:13px;line-height:17px;color:#565e82;transform:scaleX(0.864);transform-origin:0 50%;">Kod</span>
<span class="t" style="left:515.5px;top:190.5px;font-size:13px;line-height:17px;color:#565e82;letter-spacing:-0.15px;">Nazwa</span>
<span class="t" style="left:665.5px;top:190.5px;font-size:13px;line-height:17px;color:#565e82;letter-spacing:0.05px;">Data przyj...</span>
<span class="t" style="left:745.5px;top:190.5px;font-size:13px;line-height:17px;color:#565e82;transform:scaleX(0.955);transform-origin:0 50%;">Dostawca</span>
<span class="t" style="left:844.5px;top:190.5px;font-size:13px;line-height:17px;color:#565e82;letter-spacing:0.01px;">Ilość przyjęta</span>
<span class="t" style="left:944.5px;top:190.5px;font-size:13px;line-height:17px;color:#565e82;transform:scaleX(0.923);transform-origin:0 50%;">Jm</span>
<span class="t" style="left:984.5px;top:190.5px;font-size:13px;line-height:17px;color:#565e82;letter-spacing:0.02px;">Status</span>
<span class="t" style="left:1084.5px;top:190.5px;font-size:13px;line-height:17px;color:#565e82;transform:scaleX(1.051);transform-origin:0 50%;">Numer</span>
<span class="t" style="left:1184.5px;top:190.5px;font-size:13px;line-height:17px;color:#565e82;transform:scaleX(0.852);transform-origin:0 50%;">D</span>
<span class="t" style="left:203.2px;top:191.8px;font-size:10px;line-height:14px;color:#111;transform:scaleX(0.875);transform-origin:0 50%;">❋</span>
<div style="left:201px;top:210px;width:991px;height:21px;background:#eef5ee"></div>
<span class="t" style="left:644px;top:212.0px;font-size:13px;line-height:17px;color:#6a6a80;letter-spacing:0.05px;">kliknij aby dodać filtr</span>
<div style="left:201px;top:210px;width:12px;height:21px;background:#e9ebf1"></div>
<svg style="left:204px;top:217px" width="5.500" height="7" viewBox="0 0 5.500 7"><ellipse cx="2.750" cy="1.500" rx="2.600" ry="1.500" fill="#111"/><path d="M.3 1.800h4.900L3.300 4.200V7H2.200V4.200z" fill="#111"/><ellipse cx="2.750" cy="1.300" rx="1.400" ry=".5" fill="#9a9a9a"/></svg>
<div style="left:201px;top:231px;width:991px;height:1px;background:#c5ccda"></div>
<div style="left:201px;top:232px;width:991px;height:20px;background:linear-gradient(#fde9b6,#fcdb94)"></div>
<div style="left:201px;top:252px;width:991px;height:20px;background:linear-gradient(#e3eee5,#eef6ee)"></div>
<div style="left:201px;top:272px;width:991px;height:20px;background:linear-gradient(#eff0f6,#f6f6fa)"></div>
<div style="left:201px;top:232px;width:12px;height:20px;background:linear-gradient(#e3e6ed,#cfd4df)"></div>
<div style="left:201px;top:252px;width:12px;height:40px;background:#e4e7ef"></div>
<svg style="left:205px;top:238.500px" width="4.200" height="7" viewBox="0 0 5 9"><path d="M.300 .300L4.700 4.500.300 8.700z" fill="#111"/></svg>
<span class="t" style="left:215.5px;top:234.0px;font-size:13px;line-height:17px;color:#13133a;letter-spacing:0.07px;">2024/12/06/35</span>
<span class="t" style="left:365.5px;top:234.0px;font-size:13px;line-height:17px;color:#13133a;letter-spacing:-0.16px;">Liście herbaty</span>
<span class="t" style="left:515.5px;top:234.0px;font-size:13px;line-height:17px;color:#13133a;letter-spacing:-0.16px;">Liście herbaty</span>
<span class="t" style="left:665.5px;top:234.0px;font-size:13px;line-height:17px;color:#13133a;letter-spacing:-0.21px;">06.12.2024</span>
<span class="t" style="left:745.5px;top:234.0px;font-size:13px;line-height:17px;color:#13133a;letter-spacing:-0.29px;">Dostawca 1</span>
<span class="t" style="right:261.79999999999995px;top:234.0px;font-size:13px;line-height:17px;color:#13133a;transform:scaleX(0.935);transform-origin:100% 50%;">100</span>
<span class="t" style="left:946px;top:234.0px;font-size:13px;line-height:17px;color:#13133a;transform:scaleX(0.874);transform-origin:0 50%;">kg</span>
<span class="t" style="left:1006.5px;top:234.0px;font-size:13px;line-height:17px;color:#13133a;transform:scaleX(0.941);transform-origin:0 50%;">Oczekuje</span>
<svg style="left:985.500px;top:234.0px" width="16.500" height="15.500" viewBox="0 0 16.500 15.500"><circle cx="3.300" cy="3" r="2.500" fill="#e8b830" stroke="#b08418" stroke-width=".5"/><circle cx="13.200" cy="3" r="2.500" fill="#e8b830" stroke="#b08418" stroke-width=".5"/><path d="M3.500 15l2-2.500M13 15l-2-2.500" stroke="#9a9ea8" stroke-width="1.300"/><circle cx="8.250" cy="8.300" r="6" fill="#eef2f6" stroke="#e02c2c" stroke-width="1.200"/><path d="M8.250 4.300v4.200H5" fill="none" stroke="#111" stroke-width="1.100"/></svg>
<span class="t" style="left:215.5px;top:254.0px;font-size:13px;line-height:17px;color:#13133a;letter-spacing:0.07px;">2024/12/06/36</span>
<span class="t" style="left:365.5px;top:254.0px;font-size:13px;line-height:17px;color:#13133a;letter-spacing:-0.16px;">Liście herbaty</span>
<span class="t" style="left:515.5px;top:254.0px;font-size:13px;line-height:17px;color:#13133a;letter-spacing:-0.16px;">Liście herbaty</span>
<span class="t" style="left:665.5px;top:254.0px;font-size:13px;line-height:17px;color:#13133a;letter-spacing:-0.21px;">06.12.2024</span>
<span class="t" style="left:745.5px;top:254.0px;font-size:13px;line-height:17px;color:#13133a;letter-spacing:-0.29px;">Dostawca 1</span>
<span class="t" style="right:261.79999999999995px;top:254.0px;font-size:13px;line-height:17px;color:#13133a;transform:scaleX(0.919);transform-origin:100% 50%;">50</span>
<span class="t" style="left:946px;top:254.0px;font-size:13px;line-height:17px;color:#13133a;transform:scaleX(0.874);transform-origin:0 50%;">kg</span>
<span class="t" style="left:1006.5px;top:254.0px;font-size:13px;line-height:17px;color:#13133a;transform:scaleX(0.941);transform-origin:0 50%;">Oczekuje</span>
<svg style="left:985.500px;top:254.0px" width="16.500" height="15.500" viewBox="0 0 16.500 15.500"><circle cx="3.300" cy="3" r="2.500" fill="#e8b830" stroke="#b08418" stroke-width=".5"/><circle cx="13.200" cy="3" r="2.500" fill="#e8b830" stroke="#b08418" stroke-width=".5"/><path d="M3.500 15l2-2.500M13 15l-2-2.500" stroke="#9a9ea8" stroke-width="1.300"/><circle cx="8.250" cy="8.300" r="6" fill="#eef2f6" stroke="#e02c2c" stroke-width="1.200"/><path d="M8.250 4.300v4.200H5" fill="none" stroke="#111" stroke-width="1.100"/></svg>
<span class="t" style="left:215.5px;top:274.0px;font-size:13px;line-height:17px;color:#13133a;letter-spacing:0.07px;">2024/12/06/37</span>
<span class="t" style="left:365.5px;top:274.0px;font-size:13px;line-height:17px;color:#13133a;letter-spacing:-0.16px;">Liście herbaty</span>
<span class="t" style="left:515.5px;top:274.0px;font-size:13px;line-height:17px;color:#13133a;letter-spacing:-0.16px;">Liście herbaty</span>
<span class="t" style="left:665.5px;top:274.0px;font-size:13px;line-height:17px;color:#13133a;letter-spacing:-0.21px;">06.12.2024</span>
<span class="t" style="left:745.5px;top:274.0px;font-size:13px;line-height:17px;color:#13133a;letter-spacing:-0.29px;">Dostawca 1</span>
<span class="t" style="right:261.79999999999995px;top:274.0px;font-size:13px;line-height:17px;color:#13133a;transform:scaleX(0.919);transform-origin:100% 50%;">50</span>
<span class="t" style="left:946px;top:274.0px;font-size:13px;line-height:17px;color:#13133a;transform:scaleX(0.874);transform-origin:0 50%;">kg</span>
<span class="t" style="left:1006.5px;top:274.0px;font-size:13px;line-height:17px;color:#13133a;transform:scaleX(0.941);transform-origin:0 50%;">Oczekuje</span>
<svg style="left:985.500px;top:274.0px" width="16.500" height="15.500" viewBox="0 0 16.500 15.500"><circle cx="3.300" cy="3" r="2.500" fill="#e8b830" stroke="#b08418" stroke-width=".5"/><circle cx="13.200" cy="3" r="2.500" fill="#e8b830" stroke="#b08418" stroke-width=".5"/><path d="M3.500 15l2-2.500M13 15l-2-2.500" stroke="#9a9ea8" stroke-width="1.300"/><circle cx="8.250" cy="8.300" r="6" fill="#eef2f6" stroke="#e02c2c" stroke-width="1.200"/><path d="M8.250 4.300v4.200H5" fill="none" stroke="#111" stroke-width="1.100"/></svg>
<div style="left:213px;top:251px;width:978px;height:1px;background:repeating-linear-gradient(90deg,#333 0 1px,transparent 1px 2px)"></div>
<div style="left:200px;top:231.7px;width:993px;height:22.5px;border:2px solid #f01218;border-radius:5px;filter:drop-shadow(1px 2px 1.500px rgba(50,50,70,.38))"></div>
<div style="left:467.0px;top:231.7px;width:29.600px;height:29.600px;border-radius:50%;background:rgba(216,36,40,.92);border:2px solid #f5161a;box-shadow:1px 2px 4px rgba(40,30,40,.35)"></div>
<span class="t" style="left:478.1px;top:236.5px;font-size:15px;line-height:19px;color:#fff;transform:scaleX(0.875);transform-origin:0 50%;-webkit-text-stroke:.5px #fff;">3</span>
<div style="left:201px;top:357px;width:991px;height:15.5px;background:#e8eaf0"></div>
<div style="left:218px;top:357.5px;width:421.5px;height:14px;background:linear-gradient(#eceef3,#dde1e9 50%,#cfd4de);border:1px solid #9ca5b8;border-radius:2px"></div>
<div style="left:426.0px;top:361.5px;width:1px;height:6px;background:#5a6680"></div>
<div style="left:428.5px;top:361.5px;width:1px;height:6px;background:#5a6680"></div>
<div style="left:431.0px;top:361.5px;width:1px;height:6px;background:#5a6680"></div>
<svg style="left:206px;top:361px" width="5" height="8" viewBox="0 0 5 8"><path d="M4.500 .5v7L.5 4z" fill="#707b95"/></svg>
<svg style="left:1182px;top:361px" width="5" height="8" viewBox="0 0 5 8"><path d="M.5 .5v7L4.500 4z" fill="#707b95"/></svg>
<span class="t" style="left:610px;top:374.0px;font-size:11px;line-height:15px;color:#363c52;letter-spacing:2.33px;">UKRYJ SZCZEGÓŁY [F8]</span>
<div style="left:690.0px;top:392px;width:2px;height:2px;background:#7f8ca8"></div>
<div style="left:693.5px;top:392px;width:2px;height:2px;background:#7f8ca8"></div>
<div style="left:697.0px;top:392px;width:2px;height:2px;background:#7f8ca8"></div>
<div style="left:700.5px;top:392px;width:2px;height:2px;background:#7f8ca8"></div>
<div style="left:204px;top:396px;width:86px;height:27px;border:1px solid #aeab9c;border-bottom:none;border-radius:3px 3px 0 0;background:linear-gradient(#f4ecda,#f5e9c6 55%,#f8df9e)"></div>
<span class="t" style="left:235px;top:403.7px;font-size:11px;line-height:15px;color:#1c2440;transform:scaleX(0.946);transform-origin:0 50%;">Procedura</span>
<div style="left:295px;top:397px;width:107.5px;height:26px;border:1px solid #9ca8be;border-bottom:none;border-radius:3px 3px 0 0;background:linear-gradient(#f4f6fa,#e6eaf2 60%,#dde2ec)"></div>
<span class="t" style="left:324.5px;top:403.7px;font-size:11px;line-height:15px;color:#1c2440;letter-spacing:-0.12px;">Wyniki kontroli</span>
<div style="left:404px;top:397px;width:67px;height:26px;border:1px solid #9ca8be;border-bottom:none;border-radius:3px 3px 0 0;background:linear-gradient(#f4f6fa,#e6eaf2 60%,#dde2ec)"></div>
<span class="t" style="left:433.5px;top:403.7px;font-size:11px;line-height:15px;color:#1c2440;letter-spacing:-0.12px;">Partie</span>
<svg style="left:214px;top:402px" width="16" height="16" viewBox="0 0 16 16"><rect width="16" height="16" fill="#bfbfc2"/><circle cx="7.500" cy="8.500" r="6.300" fill="#e01414" stroke="#9a0a0e" stroke-width=".5"/><path d="M11.300 .8L9.300 3.500 7.300 9.800" fill="none" stroke="#fff" stroke-width="2.300" stroke-linecap="round"/><circle cx="6.600" cy="12.600" r="1.300" fill="#fff"/><path d="M11.800 .5l1.500 1" stroke="#444" stroke-width="1"/></svg>
<svg style="left:303.500px;top:401.500px" width="15" height="17" viewBox="0 0 15 17"><circle cx="7.300" cy="8" r="7" fill="#1c82e2"/><path d="M2.500 4a6.500 6.500 0 0 1 9.600 0c-3-1.500-6.600-1.500-9.600 0z" fill="#6ab4f4"/><circle cx="7.300" cy="3.600" r="1.900" fill="#fff"/><path d="M5 6.800h3.800V15l-1.400 1.800L6 15V8.300H5z" fill="#f4f6fa" stroke="#b8c4d8" stroke-width=".3"/></svg>
<svg style="left:411px;top:401px" width="18" height="18" viewBox="0 0 18 18"><rect width="18" height="18" fill="#d9dce4" opacity=".7"/><path d="M5.500 5l6-4.200L17 3v8l-5.500 4.500L5.500 13z" fill="#c8181c"/><path d="M5.500 5l6-4.200L17 3l-5.500 4.200z" fill="#ee6a6a"/><path d="M11.500 7.200L17 3v8l-5.500 4.500z" fill="#a80c10"/><path d="M1 10.800l4-2.200 4 1.300v5L5 17.200l-4-1.400z" fill="#d8282c"/><path d="M1 10.800l4-2.200 4 1.300-4 2.300z" fill="#f28a8a"/><path d="M5 12.200l4-2.300v5l-4 2.300z" fill="#a00c10"/></svg>
<div style="left:201px;top:423px;width:991px;height:1px;background:#a3aec5"></div>
<div style="left:201px;top:423.7px;width:991px;height:3.8px;background:#fce6a6;border-radius:2px 2px 0 0"></div>
<div style="left:201px;top:516px;width:991px;height:4.5px;background:#fce6a6;border-radius:0 0 2px 2px"></div>
<div style="left:201px;top:520.5px;width:991px;height:1px;background:#a3aec5"></div>
<div style="left:202px;top:428.5px;width:986px;height:86px;border:1px solid #99a3ba;background:#bcc7da;box-shadow:inset 1px 1px 0 #aab4c8"></div>
<span class="t" style="left:204px;top:429.5px;font-size:11px;line-height:15px;color:#111a3a;letter-spacing:-0.11px;">Podczas kontroli sprawdź: wagę, wilgotność, zapach, czy nie ma ciał obcych.</span>
<span class="t" style="left:204px;top:442.5px;font-size:11px;line-height:15px;color:#111a3a;letter-spacing:-0.2px;">Zgłoś wszelkie wątpliwości.</span>
<div style="left:690.0px;top:524px;width:2px;height:2px;background:#7f8ca8"></div>
<div style="left:693.5px;top:524px;width:2px;height:2px;background:#7f8ca8"></div>
<div style="left:697.0px;top:524px;width:2px;height:2px;background:#7f8ca8"></div>
<div style="left:700.5px;top:524px;width:2px;height:2px;background:#7f8ca8"></div>
<div style="left:200px;top:528px;width:993px;height:1px;background:#a9b3c8"></div>
<div style="left:200px;top:528.7px;width:993px;height:4.6px;background:#fce6a6"></div>
<div style="left:200px;top:393px;width:93.5px;height:31px;border:2px solid #f01218;border-radius:6px;filter:drop-shadow(1px 2px 1.500px rgba(50,50,70,.38))"></div>
<div style="left:200px;top:423.5px;width:407.5px;height:91px;border:2px solid #f01218;border-radius:6px;filter:drop-shadow(1px 2px 1.500px rgba(50,50,70,.38))"></div>
<div style="left:349.7px;top:448.59999999999997px;width:29.600px;height:29.600px;border-radius:50%;background:rgba(216,36,40,.92);border:2px solid #f5161a;box-shadow:1px 2px 4px rgba(40,30,40,.35)"></div>
<span class="t" style="left:360.8px;top:453.4px;font-size:15px;line-height:19px;color:#fff;transform:scaleX(0.875);transform-origin:0 50%;-webkit-text-stroke:.5px #fff;">5</span>
</div></body></html>
